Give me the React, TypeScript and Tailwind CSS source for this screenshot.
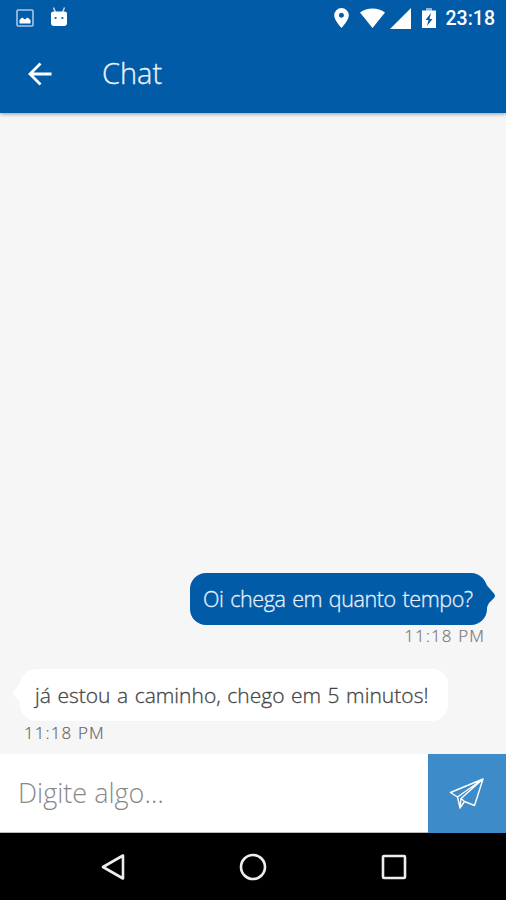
import type { ReactNode } from "react";

type Message = {
  text: string;
  time: string;
  mine: boolean;
};

const messages: Message[] = [
  { text: "Oi chega em quanto tempo?", time: "11:18 PM", mine: true },
  { text: "já estou a caminho, chego em 5 minutos!", time: "11:18 PM", mine: false },
];

function StatusBar() {
  return (
    <div className="flex h-9 items-center justify-between pl-4 pr-[11px] text-white">
      <div className="flex items-center gap-4">
        <svg className="mb-px h-[18px] w-[18px]" viewBox="0 0 18 18" fill="none">
          <rect x="1" y="1" width="16" height="16" rx="1" stroke="#a9c6e6" strokeWidth="1.6" />
          <path d="M3.500 14.500v-3.500L6 8.500l3 2 2.500-2 3 2.500v3.500z" fill="white" />
        </svg>
        <svg className="mb-[3px] h-5 w-[18px]" viewBox="0 0 18 20" fill="none">
          <path d="M3.500 .5l2 5M14.500 .5l-2 5" stroke="#c5d9ef" strokeWidth="1.500" />
          <path d="M1 6.500Q1 4.500 4 4.500h10q3 0 3 2V16q0 3-3 3H4q-3 0-3-3z" fill="white" />
          <circle cx="5.600" cy="11" r="1.100" fill="#025ba7" />
          <circle cx="12.400" cy="11" r="1.100" fill="#025ba7" />
        </svg>
      </div>
      <div className="flex items-center">
        <svg className="mr-[11px] h-5 w-[15px]" viewBox="0 0 15 20" fill="white">
          <path
            fillRule="evenodd"
            d="M7.500 0A7.300 7.300 0 0 0 .2 7.300C.2 12.500 7.500 20 7.500 20s7.300-7.500 7.300-12.700A7.300 7.300 0 0 0 7.500 0zm0 9.700a2.500 2.500 0 1 1 0-5 2.500 2.500 0 0 1 0 5z"
          />
        </svg>
        <svg className="mr-[5px] h-5 w-[25px]" viewBox="0 0 25 20" fill="white">
          <path d="M0 4.500C7 -1 18 -1 25 4.500L12.500 20z" />
        </svg>
        <svg className="mr-[11px] h-[21px] w-[21px]" viewBox="0 0 21 21" fill="white">
          <path d="M21 0v21H0z" />
        </svg>
        <svg className="mr-[10px] h-5 w-[14px]" viewBox="0 0 14 20">
          <path d="M4 0h6v3H4z" fill="#8db4dc" />
          <path d="M0 2.500h14V20H0z" fill="white" />
          <path d="M9 5L3.500 12h3L5 18l5.500-7h-3z" fill="#025ba7" />
        </svg>
        <span className="mt-0.5 font-[Roboto,sans-serif] text-[19.500px] font-medium leading-5">23:18</span>
      </div>
    </div>
  );
}

function Header() {
  return (
    <header className="z-10 h-[113px] shrink-0 bg-[#025ba7] shadow-[0_1px_4px_rgba(0,0,0,0.4)]">
      <StatusBar />
      <div className="flex h-[74px] items-center pl-7 text-white">
        <svg className="mt-0.5 h-6 w-6" viewBox="0 0 24 24" fill="none" stroke="white" strokeWidth="2.800">
          <path d="M23.500 12H2.500M12.500 1.500L2 12l10.500 10.500" />
        </svg>
        <h1 className="ml-[50px] text-[29px] font-light leading-9 text-[#eaf3fc] [-webkit-text-stroke:0.300px]">Chat</h1>
      </div>
    </header>
  );
}

function Bubble({ mine, children }: { mine: boolean; children: ReactNode }) {
  return (
    <div
      className={
        mine
          ? "relative flex h-[52px] w-[297px] items-center rounded-[16px] bg-[#025ba7] pl-[13px] text-[#e6f1fc]"
          : "relative flex h-[52px] w-[428px] items-center rounded-[16px] bg-white pl-[15px] text-[#444]"
      }
    >
      <svg
        className={
          mine
            ? "absolute -right-2 top-[11px] h-6 w-3 overflow-visible"
            : "absolute -left-[7px] top-3 h-6 w-3 -scale-x-100 overflow-visible"
        }
        viewBox="0 0 12 24"
      >
        <path d="M0 -4L4 1.500 11 9.500Q13 12 11 14L6 19Q4.500 21 3.500 26H0z" fill={mine ? "#025ba7" : "white"} />
      </svg>
      <span
        className={
          mine
            ? "whitespace-nowrap text-[21.500px] font-light leading-7 tracking-[-0.400px] [-webkit-text-stroke:0.300px] [word-spacing:1.500px]"
            : "whitespace-nowrap text-[21px] font-light leading-7 tracking-[0.020px] [-webkit-text-stroke:0.300px] [word-spacing:1px]"
        }
      >
        {children}
      </span>
    </div>
  );
}

function ChatMessage({ text, time, mine }: Message) {
  return (
    <div className={mine ? "flex flex-col items-end pr-[19px]" : "flex flex-col items-start pl-5"}>
      <Bubble mine={mine}>{text}</Bubble>
      <time
        className={
          mine
            ? "mr-0.5 text-[17px] font-light leading-[22px] tracking-[1.100px] text-[#777] [-webkit-text-stroke:0.200px]"
            : "ml-1 mt-px h-[21px] text-[17px] font-light leading-[22px] tracking-[1.100px] text-[#666] [-webkit-text-stroke:0.200px]"
        }
      >
        {time}
      </time>
    </div>
  );
}

function Composer() {
  return (
    <form className="flex h-[79px] shrink-0 bg-white">
      <input
        type="text"
        className="min-w-0 flex-1 border-b border-[#bbb] pl-[18px] text-[27px] font-light outline-none placeholder:text-[#888]"
        placeholder="Digite algo…"
      />
      <button type="button" className="flex w-[78px] items-center justify-center bg-[#3d8bc8]">
        <svg
          className="h-[31px] w-[36px]"
          viewBox="0 0 36 31"
          fill="none"
          stroke="white"
          strokeWidth="1.400"
          strokeLinejoin="round"
        >
          <path d="M34 1L1.500 14.500 8.500 19 11 30 15.500 23.500 25.500 27.500zM34 1L8.500 19M34 1L12 20.500 11 30M12 20.500L15.500 23.500" />
        </svg>
      </button>
    </form>
  );
}

function NavBar() {
  return (
    <nav className="flex h-[67px] shrink-0 items-center justify-between bg-black pl-[101px] pr-[99px]">
      <svg className="h-7 w-6" viewBox="0 0 24 28" fill="none" stroke="#eee" strokeWidth="2.600">
        <path d="M22 2.500v23L2 14z" strokeLinejoin="round" />
      </svg>
      <svg className="h-7 w-7" viewBox="0 0 28 28" fill="none" stroke="#eee" strokeWidth="2.600">
        <circle cx="14" cy="14" r="12" />
      </svg>
      <svg className="h-[26px] w-[26px]" viewBox="0 0 26 26" fill="none" stroke="#eee" strokeWidth="2.600">
        <rect x="2" y="2" width="22" height="22" rx="1" />
      </svg>
    </nav>
  );
}

export default function App() {
  return (
    <div className="flex h-[900px] w-[506px] flex-col overflow-hidden bg-[#f6f6f6] font-['Open_Sans',sans-serif]">
      <Header />
      <main className="flex flex-1 flex-col justify-end gap-[22px] pb-[11px]">
        {messages.map((message) => (
          <ChatMessage key={message.text} {...message} />
        ))}
      </main>
      <Composer />
      <NavBar />
    </div>
  );
}
